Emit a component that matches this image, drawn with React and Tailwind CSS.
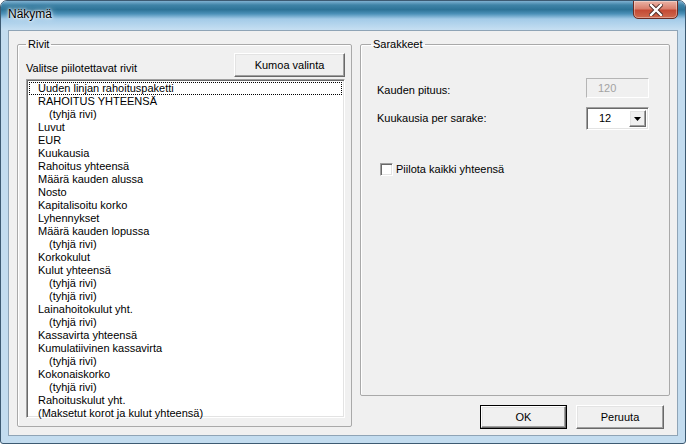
import React from 'react';

const rows = [
  ['Uuden linjan rahoituspaketti', false],
  ['RAHOITUS YHTEENSÄ', false],
  ['(tyhjä rivi)', true],
  ['Luvut', false],
  ['EUR', false],
  ['Kuukausia', false],
  ['Rahoitus yhteensä', false],
  ['Määrä kauden alussa', false],
  ['Nosto', false],
  ['Kapitalisoitu korko', false],
  ['Lyhennykset', false],
  ['Määrä kauden lopussa', false],
  ['(tyhjä rivi)', true],
  ['Korkokulut', false],
  ['Kulut yhteensä', false],
  ['(tyhjä rivi)', true],
  ['(tyhjä rivi)', true],
  ['Lainahoitokulut yht.', false],
  ['(tyhjä rivi)', true],
  ['Kassavirta yhteensä', false],
  ['Kumulatiivinen kassavirta', false],
  ['(tyhjä rivi)', true],
  ['Kokonaiskorko', false],
  ['(tyhjä rivi)', true],
  ['Rahoituskulut yht.', false],
  ['(Maksetut korot ja kulut yhteensä)', false],
];

// classic raised 3D button look
const raised =
  'bg-[#f0f0f0] border border-t-white border-l-white border-r-[#696969] border-b-[#696969] shadow-[inset_-1px_-1px_0_#a0a0a0,inset_1px_1px_0_#e3e3e3]';
const sunken =
  'border border-t-[#a0a0a0] border-l-[#a0a0a0] border-r-white border-b-white shadow-[inset_1px_1px_0_#696969,inset_-1px_-1px_0_#e3e3e3]';

export default function App() {
  return (
    <div
      className="w-[686px] h-[444px] flex flex-col bg-[#c3dcef] border border-[#3d5a72] rounded-t-[7px] rounded-b-[3px] overflow-hidden text-[11px] leading-[13px] text-black"
      style={{ fontFamily: '"Liberation Sans", Arial, sans-serif' }}
    >
      {/* Title bar */}
      <div className="h-[29px] flex justify-between bg-[linear-gradient(180deg,#7fb2d2_0%,#3f83a7_14%,#2d7397_30%,#4b90b8_44%,#a3cbe8_62%,#c6dff2_100%)]">
        <div className="pl-[7px] pt-[6px] text-[12px] leading-[15px] text-black [text-shadow:0_0_6px_#ffffff,0_0_3px_#ffffff,0_0_2px_#ffffff]">
          Näkymä
        </div>
        <button className="mr-[7px] w-[45px] h-[19px] -mt-px flex items-center justify-center rounded-b-[5px] border border-[#6b2b22] bg-[linear-gradient(180deg,#eab4a6_0%,#d9806e_45%,#c44a34_55%,#cf6a4e_100%)] shadow-[inset_0_0_0_1px_rgba(255,255,255,0.35)]">
          <svg width="14" height="12" viewBox="0 0 14 12">
            <path d="M2 1 L12 11 M12 1 L2 11" stroke="#4a2a24" strokeWidth="4.2" strokeLinecap="square" />
            <path d="M2 1 L12 11 M12 1 L2 11" stroke="#ffffff" strokeWidth="2.4" strokeLinecap="square" />
          </svg>
        </button>
      </div>

      {/* Client area */}
      <div className="mx-[7px] w-[670px] h-[406px] bg-[#f0f0f0] border border-[#8fa4b6] flex gap-[8px] pl-[8px] pr-[7px] pt-[7px]">
        {/* Rivit */}
        <fieldset className="w-[335px] h-[389px] border border-[#a9a9a9] shadow-[inset_1px_1px_0_#ffffff] pl-[8px] pr-[6px] rounded-[2px]">
          <legend className="px-[2px] leading-[13px]">Rivit</legend>
          <div className="mt-[2px] flex items-end justify-between">
            <span className="mb-[2px]">Valitse piilotettavat rivit</span>
            <button className={`w-[111px] h-[24px] ${raised}`}>Kumoa valinta</button>
          </div>
          <div className={`mt-[2px] h-[339px] bg-white p-[2px] ${sunken}`}>
            {rows.map(([label, indent], i) => (
              <div
                key={i}
                className={`h-[13px] leading-[13px] whitespace-pre ${indent ? 'pl-[20px]' : 'pl-[9px]'} ${
                  i === 0 ? 'outline-1 outline-dotted outline-black -outline-offset-1' : ''
                }`}
              >
                {label}
              </div>
            ))}
          </div>
        </fieldset>

        {/* Right column */}
        <div className="w-[310px] flex flex-col">
          <fieldset className="h-[358px] border border-[#a9a9a9] shadow-[inset_1px_1px_0_#ffffff] pl-[16px] pr-[20px] rounded-[2px]">
            <legend className="-ml-[6px] px-[2px] leading-[13px]">Sarakkeet</legend>
            <div className="mt-[27px] flex items-center justify-between h-[20px]">
              <span className="pt-[4px]">Kauden pituus:</span>
              <div className="w-[63px] h-[20px] border border-t-[#b5b5b5] border-l-[#b5b5b5] border-r-white border-b-white bg-[#f0f0f0] pl-[11px] flex items-center text-[#a3a3a3]">
                120
              </div>
            </div>
            <div className="mt-[9px] flex items-center justify-between h-[23px]">
              <span>Kuukausia per sarake:</span>
              <div className={`w-[63px] h-[23px] bg-white flex items-stretch p-[2px] ${sunken}`}>
                <span className="flex-1 pl-[10px] flex items-center">12</span>
                <span className={`w-[17px] flex items-center justify-center ${raised}`}>
                  <svg width="7" height="4" viewBox="0 0 7 4">
                    <polygon points="0,0 7,0 3.5,4" fill="#000" />
                  </svg>
                </span>
              </div>
            </div>
            <label className="mt-[33px] ml-[3px] flex items-center gap-[3px]">
              <span className={`w-[13px] h-[13px] bg-white ${sunken}`} />
              <span>Piilota kaikki yhteensä</span>
            </label>
          </fieldset>
          <div className="mt-[9px] flex justify-end gap-[9px] pr-[6px]">
            <button className="w-[87px] h-[24px] border border-black p-0">
              <span className={`w-full h-full flex items-center justify-center ${raised}`}>OK</span>
            </button>
            <button className={`w-[88px] h-[24px] ${raised}`}>Peruuta</button>
          </div>
        </div>
      </div>
    </div>
  );
}
